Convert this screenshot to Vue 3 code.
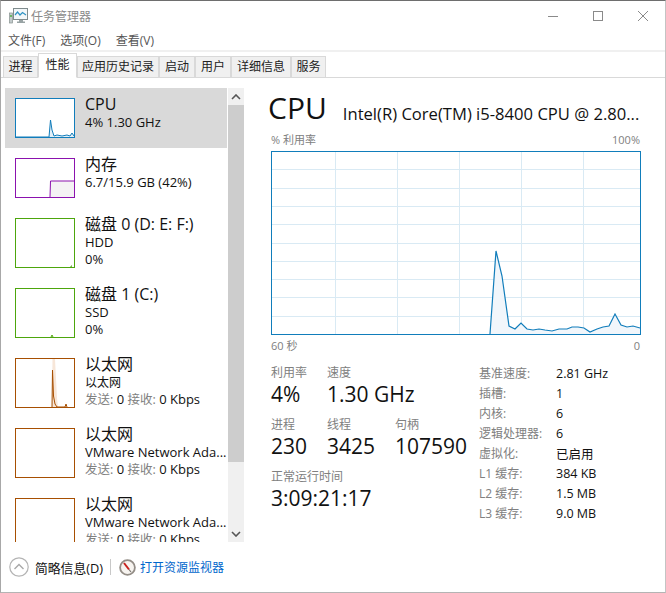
<template>
  <div class="window">
    <div class="titlebar">
      <svg class="app-icon" width="19" height="16" viewBox="0 0 19 16">
        <rect x="0.5" y="5" width="3" height="10" fill="#c3cbcc" stroke="#87928f" stroke-width="0.7" />
        <rect x="1.2" y="7" width="1.6" height="2" fill="#55b04a" />
        <rect x="4.5" y="0.5" width="14" height="11" fill="#f2f7f9" stroke="#7f8b8d" />
        <path d="M6 7l2.5-3 2.5 3 2.5-2.5 3.5 2.5" fill="none" stroke="#2f93c4" stroke-width="1.2" />
        <path d="M10 12h4v1.5h2V15H8v-1.5h2z" fill="#98a3a4" />
      </svg>
      <span class="app-name">任务管理器</span>
      <div class="win-buttons">
        <svg width="12" height="12" viewBox="0 0 12 12"><path d="M1 6.5h10" stroke="#8a8a8a" fill="none" /></svg>
        <svg width="12" height="12" viewBox="0 0 12 12"><rect x="1.5" y="1.5" width="9" height="9" stroke="#8a8a8a" fill="none" /></svg>
        <svg width="12" height="12" viewBox="0 0 12 12"><path d="M1 1l10 10M11 1L1 11" stroke="#8a8a8a" fill="none" /></svg>
      </div>
    </div>

    <div class="menubar">
      <span v-for="m in menus" :key="m">{{ m }}</span>
    </div>

    <div class="tabs">
      <div
        v-for="t in tabs"
        :key="t.name"
        class="tab"
        :class="{ active: t.name === '性能' }"
        :style="{ width: t.width + 'px' }"
      >{{ t.name }}</div>
    </div>

    <div class="body">
      <div class="sidebar">
        <div class="list">
          <div v-for="item in items" :key="item.id" class="item" :class="{ selected: item.selected }">
            <svg
              class="thumb"
              :width="60"
              :height="item.h"
              :viewBox="`0 0 60 ${item.h}`"
            >
              <rect x="0.5" y="0.5" width="59" :height="item.h - 1" fill="#fff" :stroke="item.color" />
              <polygon v-if="item.fill" :points="item.fill" :fill="item.shade" />
              <polyline v-if="item.line" :points="item.line" fill="none" :stroke="item.color" stroke-width="1" />
            </svg>
            <div class="info">
              <div class="name">{{ item.name }}</div>
              <div v-for="l in item.lines" :key="l" class="sub" :class="{ cjk: l === '以太网' }">{{ l }}</div>
              <div v-if="item.net" class="sub net">
                <span class="dim">发送:</span> 0 <span class="dim">接收:</span> 0 Kbps
              </div>
            </div>
          </div>
        </div>
        <div class="scrollbar">
          <div class="sb-btn">
            <svg width="10" height="6" viewBox="0 0 10 6"><path d="M1 5l4-4 4 4" fill="none" stroke="#555" stroke-width="1.6" /></svg>
          </div>
          <div class="sb-thumb"></div>
          <div class="sb-track"></div>
          <div class="sb-btn">
            <svg width="10" height="6" viewBox="0 0 10 6"><path d="M1 1l4 4 4-4" fill="none" stroke="#555" stroke-width="1.6" /></svg>
          </div>
        </div>
      </div>

      <div class="main">
        <div class="heading">
          <span class="big">CPU</span>
          <span class="model">Intel(R) Core(TM) i5-8400 CPU @ 2.80...</span>
        </div>
        <div class="axis top"><span>% 利用率</span><span>100%</span></div>
        <svg class="chart" width="370" height="184" viewBox="0 0 370 184">
          <path :d="gridPath" stroke="#d9eaf4" fill="none" />
          <polygon :points="chartFill" fill="#f1f6fb" />
          <polyline :points="chartLine" stroke="#117dbb" stroke-width="1.2" fill="none" />
          <rect x="0.5" y="0.5" width="369" height="183" stroke="#117dbb" fill="none" />
        </svg>
        <div class="axis bottom"><span>60 秒</span><span>0</span></div>

        <div class="stats">
          <div class="dynamic">
            <div class="stat-row">
              <div v-for="s in statsA" :key="s.label" class="stat" :style="{ width: s.w + 'px' }">
                <div class="stat-label">{{ s.label }}</div>
                <div class="stat-value">{{ s.value }}</div>
              </div>
            </div>
            <div class="stat-row">
              <div v-for="s in statsB" :key="s.label" class="stat" :style="{ width: s.w + 'px' }">
                <div class="stat-label">{{ s.label }}</div>
                <div class="stat-value">{{ s.value }}</div>
              </div>
            </div>
            <div class="stat-row">
              <div class="stat">
                <div class="stat-label">正常运行时间</div>
                <div class="stat-value">3:09:21:17</div>
              </div>
            </div>
          </div>
          <div class="specs">
            <template v-for="s in specs" :key="s[0]">
              <span class="spec-key">{{ s[0] }}</span>
              <span class="spec-val">{{ s[1] }}</span>
            </template>
          </div>
        </div>
      </div>
    </div>

    <div class="footer">
      <svg width="20" height="20" viewBox="0 0 20 20">
        <circle cx="10" cy="10" r="9.2" fill="#fff" stroke="#b4b4b4" stroke-width="1.2" />
        <path d="M5.5 12L10 7.5l4.5 4.5" fill="none" stroke="#a8a8a8" stroke-width="1.4" />
      </svg>
      <span class="brief">简略信息(D)</span>
      <span class="sep"></span>
      <svg width="17" height="17" viewBox="0 0 17 17">
        <circle cx="8.5" cy="8.5" r="7.4" fill="#f7f4f0" stroke="#938d86" stroke-width="1.8" />
        <path d="M5 4l5 6.5" stroke="#c8201c" stroke-width="2" fill="none" />
        <path d="M10 10.5l2 2.5" stroke="#77726e" stroke-width="1.2" fill="none" />
      </svg>
      <span class="link">打开资源监视器</span>
    </div>
  </div>
</template>

<script setup>
const menus = ['文件(F)', '选项(O)', '查看(V)']

const tabs = [
  { name: '进程', width: 35 },
  { name: '性能', width: 39 },
  { name: '应用历史记录', width: 82 },
  { name: '启动', width: 36 },
  { name: '用户', width: 36 },
  { name: '详细信息', width: 60 },
  { name: '服务', width: 35 }
]

const items = [
  {
    id: 'cpu', name: 'CPU', lines: ['4% 1.30 GHz'], h: 40, color: '#117dbb', shade: '#e3eff7', selected: true,
    line: '0,39 34,39 35.5,22 37,32 39,38 42,37 47,38 52,37 55,38 57,35 59,38',
    fill: '34,39 35.5,22 37,32 39,38 42,37 47,38 52,37 55,38 57,35 59,38 59,39'
  },
  {
    id: 'mem', name: '内存', lines: ['6.7/15.9 GB (42%)'], h: 40, color: '#8b12ae', shade: '#f4f2f4',
    line: '35,39 35.5,23 59,23',
    fill: '35.5,23 59,23 59,39 35.5,39'
  },
  {
    id: 'd0', name: '磁盘 0 (D: E: F:)', lines: ['HDD', '0%'], h: 50, color: '#4da60c',
    line: '56,49 56,48 57,48'
  },
  {
    id: 'd1', name: '磁盘 1 (C:)', lines: ['SSD', '0%'], h: 50, color: '#4da60c',
    line: '36,49 37,47 38,49'
  },
  {
    id: 'e0', name: '以太网', lines: ['以太网'], net: true, h: 50, color: '#a74f01', shade: '#f7e6d8',
    line: '37,49 37.5,12 38.5,38 40,46 42,49 50,49 51,46 52,49',
    fill: '37,49 37.5,1 40,1 42,40 43,49'
  },
  { id: 'e1', name: '以太网', lines: ['VMware Network Ada...'], net: true, h: 50, color: '#a74f01' },
  { id: 'e2', name: '以太网', lines: ['VMware Network Ada...'], net: true, h: 50, color: '#a74f01' }
]

// 图表折线，坐标相对于图表左上角
const pts = [
  [219, 183], [225, 100], [231, 125], [238, 175], [244, 178], [250, 172], [256, 178],
  [262, 179], [268, 178], [274, 179], [281, 180], [288, 178], [296, 178], [301, 176],
  [307, 176], [313, 177], [319, 181], [326, 178], [332, 176], [338, 175], [344, 163],
  [350, 174], [356, 176], [362, 175], [369, 177]
]
const chartLine = pts.map((p) => p.join(',')).join(' ')
const chartFill = chartLine + ' 369,183'

let grid = ''
for (let i = 1; i < 10; i++) {
  grid += `M0 ${Math.round(i * 18.3) + 0.5}H370`
}
for (let i = 0; i < 5; i++) {
  grid += `M${64.5 + i * 62} 0V184`
}
const gridPath = grid

const statsA = [
  { label: '利用率', value: '4%', w: 56 },
  { label: '速度', value: '1.30 GHz', w: 140 }
]
const statsB = [
  { label: '进程', value: '230', w: 56 },
  { label: '线程', value: '3425', w: 68 },
  { label: '句柄', value: '107590', w: 80 }
]

const specs = [
  ['基准速度:', '2.81 GHz'],
  ['插槽:', '1'],
  ['内核:', '6'],
  ['逻辑处理器:', '6'],
  ['虚拟化:', '已启用'],
  ['L1 缓存:', '384 KB'],
  ['L2 缓存:', '1.5 MB'],
  ['L3 缓存:', '9.0 MB']
]
</script>

<style>
html,
body {
  margin: 0;
  background: #fff;
}
</style>

<style scoped>
.window {
  width: 666px;
  height: 593px;
  box-sizing: border-box;
  border-top: 1px solid #6e6e6e;
  border-left: 1px solid #a8a8a8;
  border-right: 1px solid #c4c4c4;
  border-bottom: 1px solid #b4b4b4;
  background: #fff;
  overflow: hidden;
  display: flex;
  flex-direction: column;
  font-family: "Open Sans", "Noto Sans CJK SC", sans-serif;
  font-size: 12px;
  color: #111;
}

.titlebar {
  height: 29px;
  flex: none;
  display: flex;
  align-items: center;
  padding-left: 8px;
}

.app-name {
  margin-left: 3px;
  font-size: 12px;
  color: #8a8a8a;
}

.win-buttons {
  margin-left: auto;
  display: flex;
  gap: 33px;
  padding-right: 16px;
}

.menubar {
  height: 20px;
  flex: none;
  display: flex;
  align-items: center;
  gap: 15px;
  padding-left: 7px;
  color: #555;
}

.tabs {
  height: 28px;
  flex: none;
  box-sizing: border-box;
  border-top: 2px solid #f0f0f0;
  border-bottom: 1px solid #d9d9d9;
  display: flex;
  align-items: flex-end;
  padding-left: 2px;
}

.tab {
  height: 22px;
  box-sizing: border-box;
  margin-bottom: -1px;
  background: #f0f0f0;
  border: 1px solid #d9d9d9;
  text-align: center;
  line-height: 19px;
  color: #222;
}

.tab.active {
  height: 25px;
  background: #fff;
  border-bottom-color: #fff;
  line-height: 22px;
}

.body {
  flex: 1;
  min-height: 0;
  display: flex;
}

.sidebar {
  width: 243px;
  flex: none;
  padding-top: 10px;
  display: flex;
  box-sizing: border-box;
}

.list {
  width: 223px;
  margin-left: 4px;
  overflow: hidden;
}

.item {
  display: flex;
  padding: 10px 0 10px 10px;
}

.item.selected {
  background: #d9d9d9;
}

.thumb {
  flex: none;
  display: block;
}

.info {
  margin-left: 10px;
  margin-top: -3px;
  white-space: nowrap;
}

.name {
  font-size: 16px;
  line-height: 19px;
}

.sub {
  font-size: 13px;
  line-height: 17px;
}

.sub.cjk {
  font-size: 12px;
}

.dim {
  color: #808080;
  font-size: 12.5px;
}

.scrollbar {
  width: 16px;
  margin-left: 1px;
  display: flex;
  flex-direction: column;
  background: #f0f0f0;
}

.sb-btn {
  height: 17px;
  flex: none;
  display: flex;
  align-items: center;
  justify-content: center;
}

.sb-thumb {
  height: 357px;
  flex: none;
  background: #cdcdcd;
}

.sb-track {
  flex: 1;
}

.main {
  flex: 1;
  min-width: 0;
  padding: 11px 25px 0 27px;
}

.heading {
  display: flex;
  align-items: baseline;
  height: 37px;
  white-space: nowrap;
}

.big {
  font-size: 30px;
  line-height: 37px;
  margin-left: -3px;
}

.model {
  font-size: 16.6px;
  margin-left: 16px;
  position: relative;
  top: 1px;
}

.axis {
  display: flex;
  justify-content: space-between;
  color: #808080;
  font-size: 11px;
  line-height: 16px;
}

.axis.top {
  margin-top: 6px;
  margin-bottom: 3px;
}

.chart {
  display: block;
}

.axis.bottom {
  margin-top: 3px;
}

.stats {
  display: flex;
  margin-top: 11px;
}

.dynamic {
  width: 208px;
  flex: none;
}

.stat-row {
  display: flex;
  margin-bottom: 9px;
}

.stat-label {
  color: #808080;
  font-size: 12px;
  line-height: 16px;
}

.stat-value {
  font-size: 21px;
  line-height: 27px;
}

.specs {
  display: grid;
  grid-template-columns: 77px auto;
  grid-auto-rows: 20px;
  align-items: center;
  margin-top: -2px;
  align-self: flex-start;
}

.spec-key {
  color: #808080;
}

.spec-val {
  font-size: 12.5px;
}

.footer {
  height: 50px;
  flex: none;
  display: flex;
  align-items: center;
  padding-left: 8px;
}

.brief {
  margin-left: 6px;
  font-size: 12.8px;
}

.sep {
  width: 1px;
  height: 16px;
  background: #c8c8c8;
  margin: 0 8px 0 7px;
}

.link {
  margin-left: 4px;
  color: #0066cc;
}
</style>
